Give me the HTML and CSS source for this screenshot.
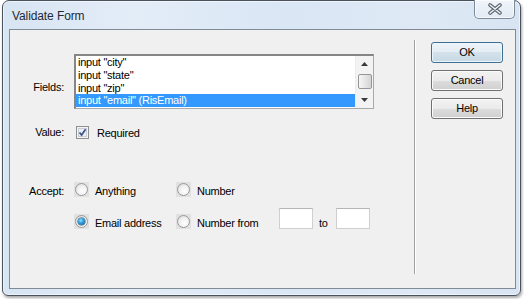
FILE: index.html
```html
<!DOCTYPE html>
<html>
<head>
<meta charset="utf-8">
<title>Validate Form</title>
<link rel="stylesheet" href="styles.css">
</head>
<body>
<div class="window">
  <div class="titlebar">
    <span class="title">Validate Form</span>
    <div class="close">
      <svg width="16" height="12" viewBox="0 0 16 12">
        <path d="M3 2 L13 10 M13 2 L3 10" stroke="#5d6672" stroke-width="3.6" stroke-linecap="round" fill="none"/>
        <path d="M3 2 L13 10 M13 2 L3 10" stroke="#f3f5f8" stroke-width="1.4" stroke-linecap="round" fill="none"/>
      </svg>
    </div>
  </div>
  <div class="client">
    <div class="form">
      <div class="grid">
        <div class="lbl lbl-fields">Fields:</div>
        <div class="listbox">
          <div class="items">
            <div class="item">input "city"</div>
            <div class="item">input "state"</div>
            <div class="item">input "zip"</div>
            <div class="item sel">input "email" (RisEmail)</div>
          </div>
          <div class="scrollbar">
            <div class="sb-btn">
              <svg width="7" height="4" viewBox="0 0 7 4"><path d="M0 4 L3.5 0 L7 4 Z" fill="#3a3a3a"/></svg>
            </div>
            <div class="thumb"></div>
            <div class="sb-space"></div>
            <div class="sb-btn">
              <svg width="7" height="4" viewBox="0 0 7 4"><path d="M0 0 L7 0 L3.5 4 Z" fill="#3a3a3a"/></svg>
            </div>
          </div>
        </div>

        <div class="lbl lbl-value">Value:</div>
        <div class="check-row">
          <span class="checkbox">
            <svg width="13" height="13" viewBox="0 0 13 13">
              <rect x="0.5" y="0.5" width="12" height="12" fill="#f4f4f4" stroke="#8e8f8f"/>
              <rect x="2.5" y="2.5" width="8" height="8" fill="#e9eef4" stroke="#c9ced6"/>
              <path d="M3.5 6.5 L5.6 9 L9.6 3.2" stroke="#3d5387" stroke-width="1.7" fill="none"/>
            </svg>
          </span>
          <span class="check-text">Required</span>
        </div>

        <div class="lbl lbl-accept">Accept:</div>
        <div class="accept">
          <div class="opt">
            <span class="radio"><span class="circle"></span></span>
            <span class="opt-text">Anything</span>
          </div>
          <div class="opt">
            <span class="radio"><span class="circle"></span></span>
            <span class="opt-text">Number</span>
          </div>
          <div class="opt">
            <span class="radio"><span class="circle on"><span class="dot"></span></span></span>
            <span class="opt-text">Email address</span>
          </div>
          <div class="opt">
            <span class="radio"><span class="circle"></span></span>
            <span class="opt-text from">Number from</span>
            <span class="field"></span>
            <span class="to">to</span>
            <span class="field"></span>
          </div>
        </div>
      </div>
    </div>
    <div class="sep"></div>
    <div class="buttons">
      <div class="btn default">OK</div>
      <div class="btn">Cancel</div>
      <div class="btn">Help</div>
    </div>
  </div>
</div>
</body>
</html>
```

FILE: styles.css
```css
* { box-sizing: border-box; }

html, body {
  margin: 0;
  padding: 0;
  background: #ffffff;
}

body {
  width: 524px;
  height: 299px;
  overflow: hidden;
  font-family: "Liberation Sans", Arial, sans-serif;
  font-size: 11px;
  letter-spacing: -0.25px;
  color: #000;
}

.window {
  width: 519px;
  height: 296px;
  margin-left: 2px;
  border: 1px solid #4a525c;
  border-radius: 7px 7px 6px 6px;
  background: linear-gradient(to right, #d7e4f2 0%, #e3edf8 25%, #d9e6f4 55%, #dfe9f6 80%, #d8e4f2 100%);
  box-shadow: 1px 2px 3px rgba(0, 0, 0, 0.35), inset 0 0 0 1px rgba(255, 255, 255, 0.55);
  display: flex;
  flex-direction: column;
}

.titlebar {
  height: 28px;
  display: flex;
  align-items: flex-start;
}

.title {
  font-size: 12px;
  letter-spacing: -0.1px;
  color: #1e2a36;
  margin-left: 9px;
  margin-top: 8px;
  line-height: 14px;
}

.close {
  margin-left: auto;
  margin-right: 5px;
  margin-top: -1px;
  width: 41px;
  height: 19px;
  border: 1px solid #7d8a99;
  border-top: none;
  border-radius: 0 0 5px 5px;
  background: linear-gradient(#f1f5fa, #e2eaf4);
  box-shadow: inset 0 0 0 1px rgba(255, 255, 255, 0.7);
  display: flex;
  align-items: center;
  justify-content: center;
}

.client {
  margin: 0 4px 6px 6px;
  height: 260px;
  border: 1px solid #7f8b97;
  background: #f0f0f0;
  display: flex;
}

.form {
  width: 404px;
  padding-top: 24px;
}

.grid {
  display: grid;
  grid-template-columns: 54px 1fr;
  column-gap: 10px;
  align-items: start;
}

.lbl {
  text-align: right;
  line-height: 13px;
}

.lbl-fields { padding-top: 27px; }
.lbl-value { margin-top: 16px; padding-top: 1px; }
.lbl-accept { margin-top: 43px; padding-top: 3px; }

/* list box */
.listbox {
  width: 300px;
  height: 55px;
  border-style: solid;
  border-width: 2px 1px 1px 2px;
  border-color: #868686 #a9a9a9 #a9a9a9 #868686;
  background: #fff;
  display: flex;
}

.items {
  flex: 1;
}

.item {
  height: 13px;
  line-height: 13px;
  padding-left: 2px;
  white-space: nowrap;
}

.item.sel {
  background: #3399ff;
  color: #fff;
  margin-top: -1px;
}

.scrollbar {
  width: 18px;
  background: #f3f3f3;
  border-left: 1px solid #ececec;
  display: flex;
  flex-direction: column;
  align-items: center;
}

.sb-btn {
  height: 16px;
  width: 100%;
  display: flex;
  align-items: center;
  justify-content: center;
}

.thumb {
  margin-top: 2px;
  width: 14px;
  height: 15px;
  border: 1px solid #969696;
  border-radius: 2px;
  background: linear-gradient(to right, #f6f6f6, #e6e6e6 50%, #d4d4d4);
}

.sb-space { flex: 1; }

/* checkbox */
.check-row {
  margin-top: 16px;
  display: flex;
  align-items: center;
  height: 14px;
}

.checkbox {
  width: 13px;
  height: 13px;
  margin-left: 2px;
  display: flex;
}

.check-text {
  margin-left: 8px;
  line-height: 13px;
  padding-top: 2px;
}

/* accept options */
.accept {
  margin-top: 43px;
  display: grid;
  grid-template-columns: 102px auto;
  row-gap: 16px;
}

.opt {
  display: flex;
  align-items: flex-start;
  height: 16px;
}

.radio {
  width: 15px;
  height: 15px;
  background: #e1e1e1;
  display: flex;
  align-items: center;
  justify-content: center;
  flex: none;
}

.circle {
  width: 13px;
  height: 13px;
  border-radius: 50%;
  border: 1px solid #9a9a9a;
  background: radial-gradient(circle at 60% 65%, #ffffff 0%, #f2f2f2 45%, #d6d6d6 100%);
  display: flex;
  align-items: center;
  justify-content: center;
}

.dot {
  width: 7px;
  height: 7px;
  border-radius: 50%;
  background: radial-gradient(circle at 40% 35%, #8fe0ff 0%, #2c9ad8 45%, #0c4f80 100%);
  box-shadow: 0 0 0 0.5px #174a6e;
}

.opt-text {
  margin-left: 6px;
  margin-top: 3px;
  line-height: 13px;
  white-space: nowrap;
}

.opt-text.from {
  width: 82px;
}

.field {
  width: 34px;
  height: 21px;
  margin-top: -6px;
  background: #fff;
  border: 1px solid #cfcfcf;
  border-top-color: #b5b5b5;
  flex: none;
}

.to {
  width: 17px;
  margin-left: 6px;
  margin-top: 3px;
  line-height: 13px;
}

/* separator & buttons */
.sep {
  width: 2px;
  margin-top: 10px;
  height: 234px;
  border-left: 1px solid #a0a0a0;
  border-right: 1px solid #ffffff;
}

.buttons {
  margin-left: 15px;
  padding-top: 12px;
  display: flex;
  flex-direction: column;
  gap: 7px;
}

.btn {
  width: 72px;
  height: 21px;
  border: 1px solid #707070;
  border-radius: 3px;
  background: linear-gradient(#f2f2f2 0%, #ebebeb 50%, #dddddd 50%, #cfcfcf 100%);
  box-shadow: inset 0 0 0 1px #fbfbfb;
  display: flex;
  align-items: center;
  justify-content: center;
  line-height: 13px;
}

.btn.default {
  border-color: #3f6f93;
  background: linear-gradient(#eef4f8 0%, #e4edf3 50%, #d3e1ea 50%, #c8d9e4 100%);
  box-shadow: inset 0 0 0 1px #eaf6fd;
}
```
